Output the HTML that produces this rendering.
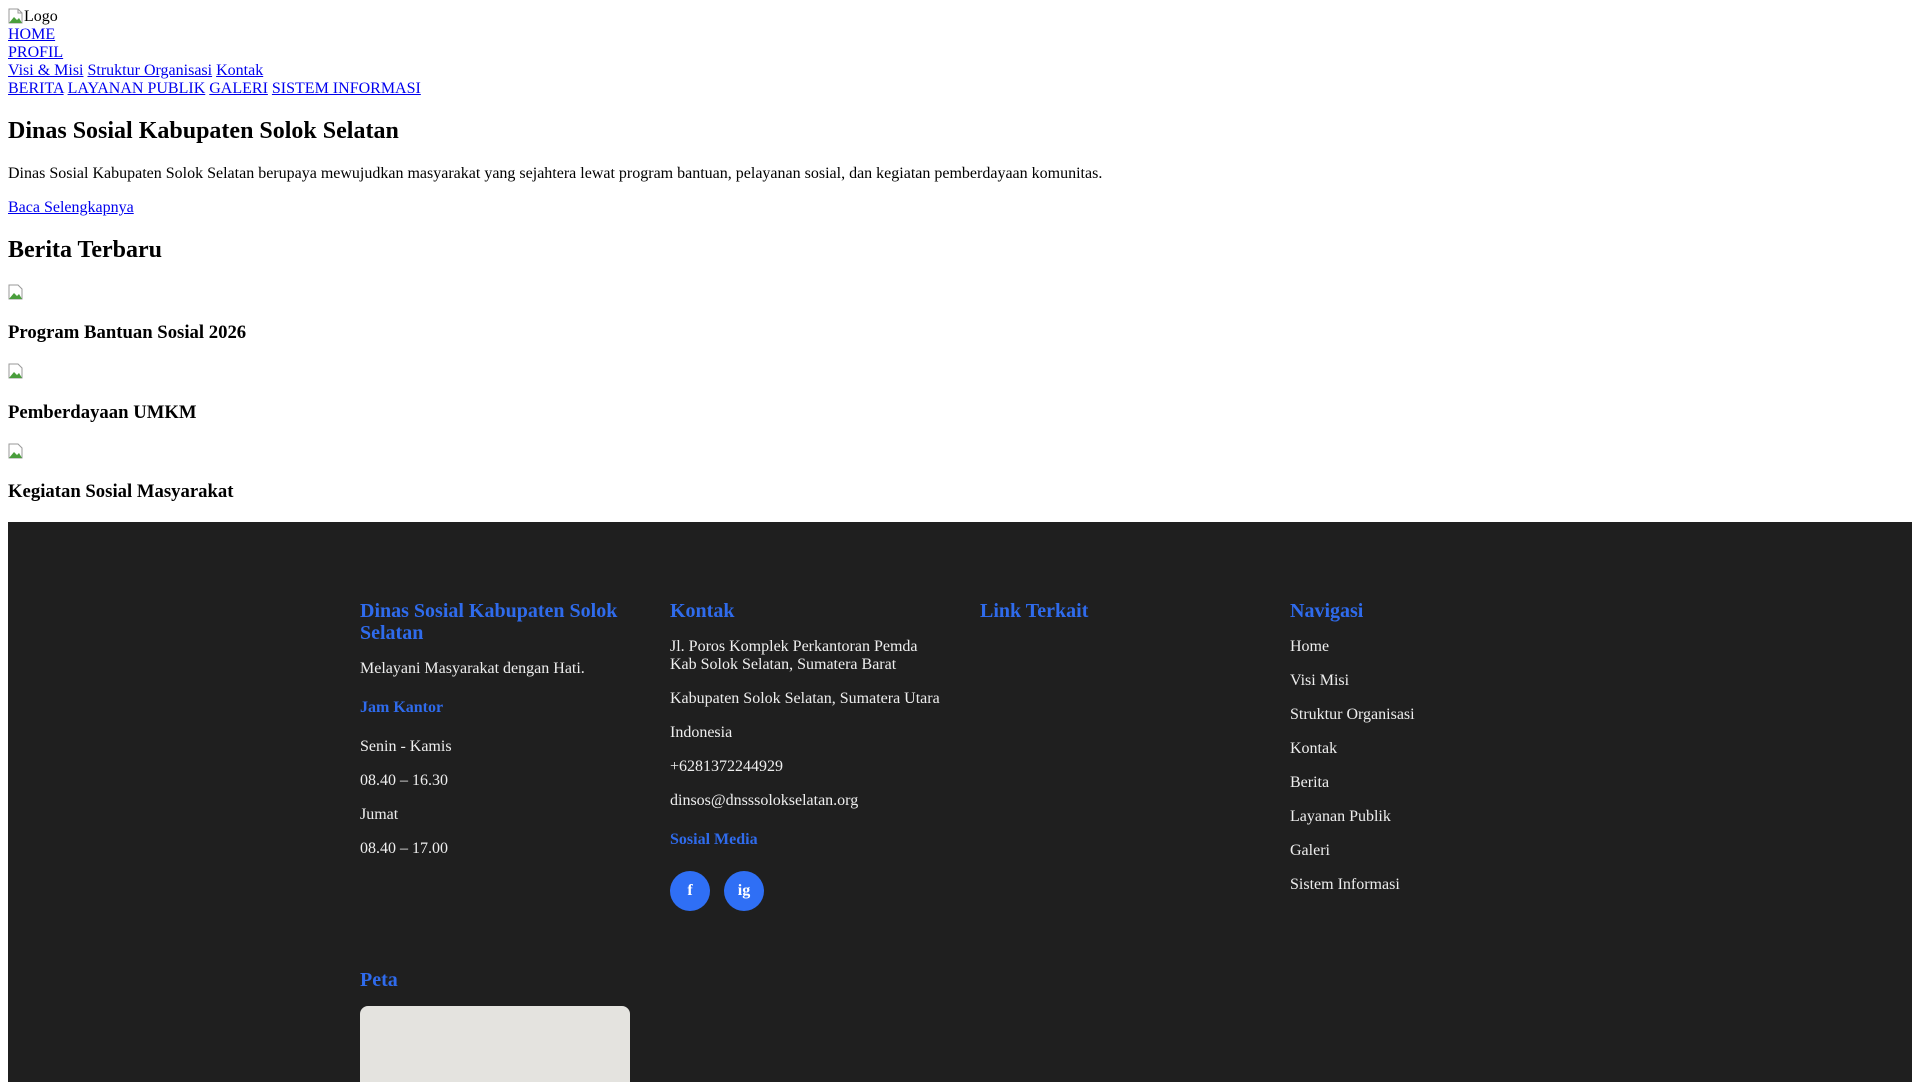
<!DOCTYPE html>
<html><head><meta charset="utf-8">
<style>
html,body{height:1080px;overflow:hidden}
body{margin:8px 8px 0;font-family:"Liberation Serif",serif;font-size:16px;background:#fff;color:#000}
a{color:#0000ee}
.bi{display:inline-block;width:16px;height:16px;vertical-align:-3px}
.ai{display:inline-block;width:16px;height:16px;vertical-align:-1px}
h2{font-size:24px;margin:19.92px 0}
h3.n{font-size:18.72px;margin:18.72px 0}
footer{position:relative;background:#1f1f1f;height:560px;overflow:hidden;color:#eee}
.col{position:absolute;top:78px;width:270px}
.col h3{color:#2f6bec;font-size:20px;line-height:22px;margin:0}
.col h4{color:#2f6bec;font-size:16px;line-height:18px;margin:21px 0}
.col p{margin:16px 0;line-height:18px}
.col ul{list-style:none;margin:16px 0;padding:0}
.col li{line-height:18px;margin-bottom:16px}
.col li a{color:#eee;text-decoration:none}
.soc{display:inline-block;width:40px;height:40px;border-radius:50%;background:#2f6ff5;color:#fff;text-align:center;line-height:40px;font-weight:bold;margin-right:14px}
</style></head><body>
<div><svg class="bi" viewBox="0 0 16 16"><path d="M1 1h9l4 4v10H1z" fill="#fff" stroke="#999"/><path d="M1 15l5-6 3 3 2-2 3 5z" fill="#4a9e3c"/><path d="M10 1v4h4" fill="none" stroke="#999"/></svg>Logo</div>
<div><a href="#">HOME</a></div>
<div><a href="#">PROFIL</a></div>
<div><a href="#">Visi &amp; Misi</a> <a href="#">Struktur Organisasi</a> <a href="#">Kontak</a></div>
<div><a href="#">BERITA</a> <a href="#">LAYANAN PUBLIK</a> <a href="#">GALERI</a> <a href="#">SISTEM INFORMASI</a></div>
<h2>Dinas Sosial Kabupaten Solok Selatan</h2>
<p>Dinas Sosial Kabupaten Solok Selatan berupaya mewujudkan masyarakat yang sejahtera lewat program bantuan, pelayanan sosial, dan kegiatan pemberdayaan komunitas.</p>
<p><a href="#">Baca Selengkapnya</a></p>
<h2>Berita Terbaru</h2>
<div><svg class="ai" viewBox="0 0 16 16"><path d="M1 1h9l4 4v10H1z" fill="#fff" stroke="#999"/><path d="M1 15l5-6 3 3 2-2 3 5z" fill="#4a9e3c"/></svg><h3 class="n">Program Bantuan Sosial 2026</h3></div>
<div><svg class="ai" viewBox="0 0 16 16"><path d="M1 1h9l4 4v10H1z" fill="#fff" stroke="#999"/><path d="M1 15l5-6 3 3 2-2 3 5z" fill="#4a9e3c"/></svg><h3 class="n">Pemberdayaan UMKM</h3></div>
<div><svg class="ai" viewBox="0 0 16 16"><path d="M1 1h9l4 4v10H1z" fill="#fff" stroke="#999"/><path d="M1 15l5-6 3 3 2-2 3 5z" fill="#4a9e3c"/></svg><h3 class="n">Kegiatan Sosial Masyarakat</h3></div>
<footer>
<div class="col" style="left:352px">
<h3>Dinas Sosial Kabupaten Solok Selatan</h3>
<p>Melayani Masyarakat dengan Hati.</p>
<h4>Jam Kantor</h4>
<p>Senin - Kamis</p><p>08.40 – 16.30</p><p>Jumat</p><p>08.40 – 17.00</p>
</div>
<div class="col" style="left:662px">
<h3>Kontak</h3>
<p>Jl. Poros Komplek Perkantoran Pemda<br>Kab Solok Selatan, Sumatera Barat</p>
<p>Kabupaten Solok Selatan, Sumatera Utara</p>
<p>Indonesia</p><p>+6281372244929</p><p>dinsos@dnsssolokselatan.org</p>
<h4>Sosial Media</h4>
<div style="margin-top:22px"><span class="soc">f</span><span class="soc">ig</span></div>
</div>
<div class="col" style="left:972px"><h3>Link Terkait</h3></div>
<div class="col" style="left:1282px">
<h3>Navigasi</h3>
<ul><li><a href="#">Home</a></li><li><a href="#">Visi Misi</a></li><li><a href="#">Struktur Organisasi</a></li><li><a href="#">Kontak</a></li><li><a href="#">Berita</a></li><li><a href="#">Layanan Publik</a></li><li><a href="#">Galeri</a></li><li><a href="#">Sistem Informasi</a></li></ul>
</div>
<div class="col" style="left:352px;top:447px"><h3>Peta</h3>
<div style="margin-top:15px;width:270px;height:200px;background:#e4e3df;border-radius:8px"></div></div>
</footer>
</body></html>
